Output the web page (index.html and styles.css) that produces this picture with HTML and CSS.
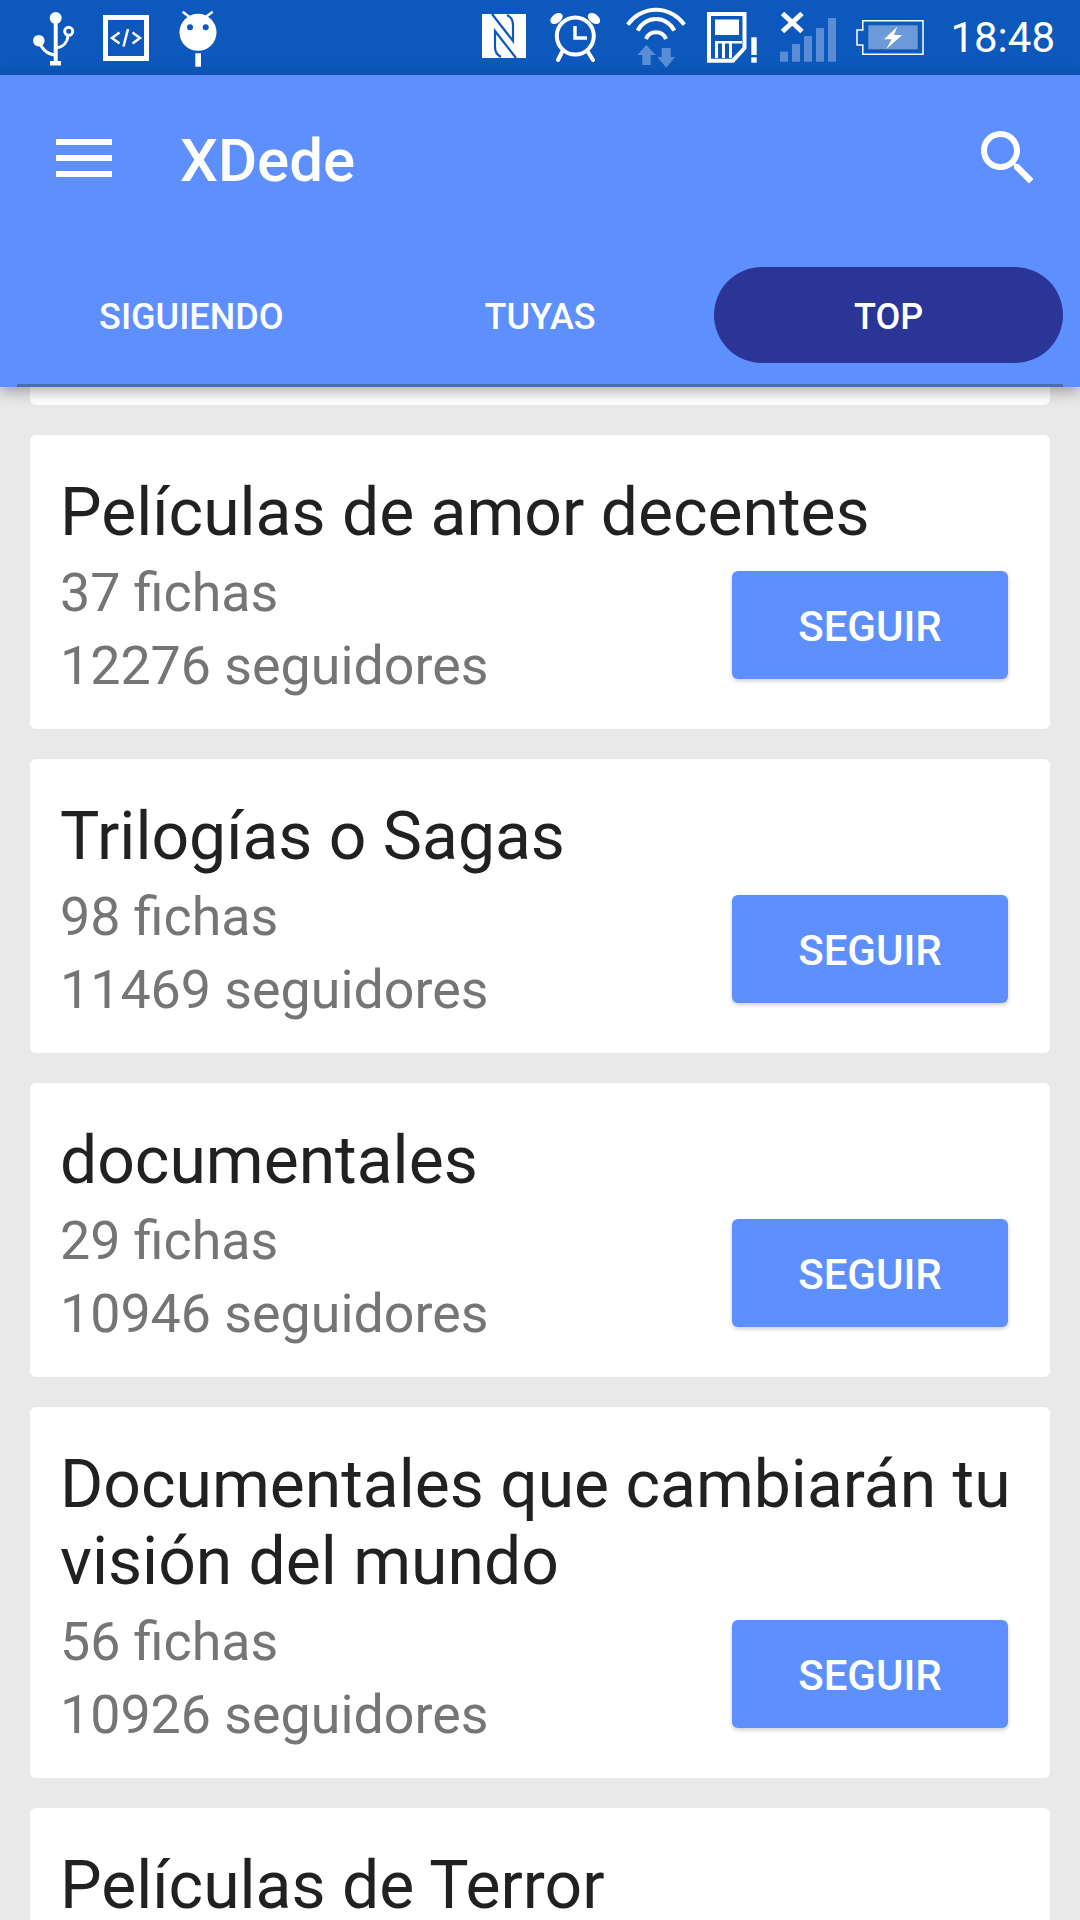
FILE: index.html
```html
<!DOCTYPE html>
<html lang="en">
<head>
  <meta charset="UTF-8">
  <meta name="viewport" content="width=device-width, initial-scale=1.0">
  <title>XDede</title>
  <link rel="stylesheet" href="styles.css">
</head>
<body>
  <!-- Status bar -->
  <div class="status-bar">
    <div class="status-left">
      <svg class="status-icon" width="42" height="75" viewBox="0 0 42 75">
        <circle cx="22.7" cy="18" r="6" fill="#fff"/>
        <rect x="20.7" y="18" width="4" height="44" fill="#fff"/>
        <rect x="17" y="61" width="11" height="4.5" fill="#fff"/>
        <circle cx="5.8" cy="40.7" r="5.8" fill="#fff"/>
        <path d="M6 41C9 50 14 54 22 55M35 36C34 44 30 47 23 48" fill="none" stroke="#fff" stroke-width="3"/>
        <circle cx="35.7" cy="31.3" r="4" fill="none" stroke="#fff" stroke-width="3"/>
      </svg>
      <svg class="status-icon" width="46" height="75" viewBox="0 0 46 75">
        <rect x="2.5" y="17.5" width="41" height="41" fill="none" stroke="#fff" stroke-width="5"/>
        <path d="M16.5 32.5L9 38l7.500 5.500M20.500 46.500L25 29M29.500 32.500L37 38l-7.500 5.500" fill="none" stroke="#fff" stroke-width="2.500"/>
      </svg>
      <svg class="status-icon" width="43" height="75" viewBox="0 0 43 75">
        <circle cx="21" cy="32.300" r="18.500" fill="#fff"/>
        <circle cx="13" cy="27.300" r="3" fill="#0d58bc"/>
        <circle cx="28.700" cy="27.300" r="3" fill="#0d58bc"/>
        <path d="M5.700 11.700L12 16.700M35.700 11.700L29 16.700" stroke="#fff" stroke-width="2.500"/>
        <rect x="18.300" y="53.300" width="5.700" height="13.400" fill="#fff"/>
      </svg>
    </div>
    <div class="status-right">
      <svg class="status-icon" width="48" height="75" viewBox="0 0 48 75">
        <rect x="0" y="14" width="44" height="44" fill="#fff"/>
        <g transform="translate(0 14)" fill="none" stroke="#0d58bc" stroke-width="2.200">
          <path d="M10 0L31 27V11Q31 4 25 1"/>
          <path d="M34 44L13 17V33Q13 40 19 43"/>
        </g>
      </svg>
      <svg class="status-icon" width="55" height="75" viewBox="0 0 55 75">
        <circle cx="25.300" cy="36" r="18.500" fill="none" stroke="#fff" stroke-width="4"/>
        <ellipse cx="6.500" cy="18.500" rx="7" ry="4.500" transform="rotate(-38 6.500 18.500)" fill="#fff"/>
        <ellipse cx="44" cy="18.500" rx="7" ry="4.500" transform="rotate(38 44 18.500)" fill="#fff"/>
        <path d="M25 26V38H37" fill="none" stroke="#fff" stroke-width="3.500"/>
        <path d="M12 52L8 60M38 52L43 60" stroke="#fff" stroke-width="4" stroke-linecap="round"/>
      </svg>
      <svg class="status-icon" width="62" height="75" viewBox="0 0 62 75">
        <path d="M2.700 24.700A34.200 34.200 0 0 1 59.300 24.700M12.700 30.700A20.200 20.200 0 0 1 49.300 30.700M21 39A10.800 10.800 0 0 1 41 39" fill="none" stroke="#fff" stroke-width="4"/>
        <path d="M21.300 45L30.700 55H25.700V65H17.300V55H12.300Z" fill="#5b8dd6"/>
        <path d="M36.700 48H45.700V57H50L41.300 67.700L32.300 57H36.700Z" fill="#5b8dd6"/>
      </svg>
      <svg class="status-icon" width="52" height="75" viewBox="0 0 52 75">
        <path d="M2 14H37.500V48L26 60.700H2Z" fill="none" stroke="#fff" stroke-width="4"/>
        <rect x="8" y="19.500" width="24" height="15.500" fill="#fff"/>
        <rect x="8" y="42" width="3" height="16" fill="#fff"/>
        <rect x="15" y="42" width="3" height="16" fill="#fff"/>
        <rect x="22" y="42" width="3" height="16" fill="#fff"/>
        <rect x="8" y="41" width="27" height="2.500" fill="#fff"/>
        <rect x="44.300" y="37.300" width="5.400" height="17.700" fill="#fff"/>
        <rect x="44.300" y="57.300" width="5.400" height="5.400" fill="#fff"/>
      </svg>
      <svg class="status-icon" width="57" height="75" viewBox="0 0 57 75">
        <path d="M3.500 13.500L23 31.500M23 13.500L3.500 31.500" stroke="#fff" stroke-width="5"/>
        <rect x="1" y="51.700" width="8" height="10" fill="#5b8dd6"/>
        <rect x="13" y="44" width="8" height="17.700" fill="#5b8dd6"/>
        <rect x="25" y="36" width="8" height="25.700" fill="#5b8dd6"/>
        <rect x="37" y="28" width="8" height="33.700" fill="#5b8dd6"/>
        <rect x="49" y="18" width="8" height="43.700" fill="#5b8dd6"/>
      </svg>
      <svg class="status-icon" width="74" height="75" viewBox="0 0 74 75">
        <path d="M6.800 20.700H67V54.300H6.800V45H1V30H6.800Z" fill="none" stroke="#fff" stroke-width="1.500"/>
        <rect x="12.300" y="25.300" width="49.400" height="24" fill="#6c9ad8"/>
        <path d="M41.300 26.700L28 39.300H35.700L30.300 49L46.300 35H38Z" fill="#fff"/>
      </svg>
      <span class="clock">18:48</span>
    </div>
  </div>

  <!-- Header -->
  <header class="app-bar">
    <div class="toolbar">
      <svg class="menu-icon" width="56" height="38" viewBox="0 0 56 38">
        <rect width="56" height="6" fill="#fff"/>
        <rect y="16" width="56" height="6" fill="#fff"/>
        <rect y="32" width="56" height="6" fill="#fff"/>
      </svg>
      <span class="app-title">XDede</span>
      <svg class="search-icon" width="72" height="72" viewBox="0 0 24 24">
        <path fill="#fff" d="M15.500 14h-.79l-.28-.27C15.410 12.590 16 11.110 16 9.500 16 5.910 13.090 3 9.500 3S3 5.910 3 9.500 5.910 16 9.500 16c1.610 0 3.090-.59 4.230-1.570l.27.28v.79l5 4.990L20.490 19l-4.990-5zm-6 0C7.010 14 5 11.990 5 9.500S7.010 5 9.500 5 14 7.010 14 9.500 11.990 14 9.500 14z"/>
      </svg>
    </div>
    <nav class="tabs">
      <div class="tab">SIGUIENDO</div>
      <div class="tab">TUYAS</div>
      <div class="tab tab-active">TOP</div>
    </nav>
  </header>

  <!-- Lists -->
  <main class="list">
    <div class="card card-stub"></div>

    <div class="card">
      <h2 class="card-title">Películas de amor decentes</h2>
      <div class="card-row">
        <div class="card-meta">
          <p>37 fichas</p>
          <p>12276 seguidores</p>
        </div>
        <button class="follow-btn">SEGUIR</button>
      </div>
    </div>

    <div class="card">
      <h2 class="card-title">Trilogías o Sagas</h2>
      <div class="card-row">
        <div class="card-meta">
          <p>98 fichas</p>
          <p>11469 seguidores</p>
        </div>
        <button class="follow-btn">SEGUIR</button>
      </div>
    </div>

    <div class="card">
      <h2 class="card-title">documentales</h2>
      <div class="card-row">
        <div class="card-meta">
          <p>29 fichas</p>
          <p>10946 seguidores</p>
        </div>
        <button class="follow-btn">SEGUIR</button>
      </div>
    </div>

    <div class="card">
      <h2 class="card-title">Documentales que cambiarán tu visión del mundo</h2>
      <div class="card-row">
        <div class="card-meta">
          <p>56 fichas</p>
          <p>10926 seguidores</p>
        </div>
        <button class="follow-btn">SEGUIR</button>
      </div>
    </div>

    <div class="card">
      <h2 class="card-title">Películas de Terror</h2>
    </div>
  </main>
</body>
</html>
```

FILE: styles.css
```css
/* General Styles */
html, body {
  margin: 0;
  height: 1920px;
  overflow: hidden;
}

body {
  font-family: Roboto, "Liberation Sans", sans-serif;
  background-color: #e9e9e9;
}

/* Status bar */
.status-bar {
  display: flex;
  justify-content: space-between;
  height: 75px;
  padding: 0 25px 0 33px;
  background-color: #0d58bc;
  color: #fff;
}

.status-left {
  display: flex;
  gap: 28px;
}

.status-right {
  display: flex;
  align-items: center;
  gap: 20px;
}

.status-icon {
  display: block;
  flex: none;
}

.clock {
  font-size: 42px;
  line-height: 75px;
}

/* Header */
.app-bar {
  position: relative;
  z-index: 1;
  height: 312px;
  background-color: #5e8fff;
  color: #fff;
  box-shadow: 0 4px 14px rgba(0, 0, 0, 0.35);
}

.toolbar {
  display: flex;
  align-items: center;
  height: 166px;
  padding: 0 36px 0 56px;
}

.menu-icon {
  flex: none;
}

.app-title {
  margin-left: 68px;
  padding-top: 4px;
  font-size: 60px;
  font-weight: 500;
}

.search-icon {
  flex: none;
  margin-left: auto;
}

.tabs {
  display: flex;
  height: 146px;
  margin: 0 17px;
  padding-top: 26px;
  box-sizing: border-box;
  border-bottom: 3px solid #4a6cb8;
}

.tab {
  flex: 1;
  height: 96px;
  line-height: 100px;
  border-radius: 48px;
  text-align: center;
  font-size: 36px;
  font-weight: 500;
}

.tab-active {
  background-color: #2a3596;
}

/* Cards */
.list {
  display: flex;
  flex-direction: column;
  gap: 30px;
  padding: 0 30px;
}

.card {
  flex: none;
  padding: 39px 30px 27px;
  border-radius: 6px;
  background-color: #fff;
}

.card-stub {
  height: 18px;
  padding: 0;
  border-radius: 0 0 6px 6px;
}

.card-title {
  margin: 0 0 5px;
  font-size: 66px;
  font-weight: 400;
  line-height: 77px;
  color: #212121;
}

.card-row {
  display: flex;
  justify-content: space-between;
  align-items: flex-end;
}

.card-meta p {
  margin: 0;
  font-size: 53.75px;
  line-height: 73px;
  color: #757575;
}

.follow-btn {
  width: 276px;
  height: 108px;
  margin: 0 12px 23px 0;
  padding: 2px 0 0;
  border: none;
  border-radius: 6px;
  background-color: #5e8fff;
  color: #fff;
  font-family: inherit;
  font-size: 42px;
  font-weight: 500;
  box-shadow: 0 2px 4px rgba(0, 0, 0, 0.2);
}
```
